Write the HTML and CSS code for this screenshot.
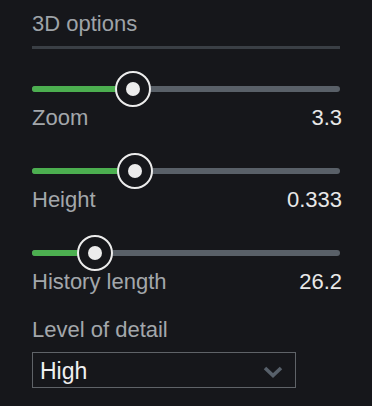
FILE: index.html
```html
<!DOCTYPE html>
<html>
<head>
<meta charset="utf-8">
<link rel="stylesheet" href="styles.css">
</head>
<body>
<div class="panel">
  <div class="title">3D options</div>
  <div class="divider"></div>

  <div class="group">
    <div class="slider">
      <div class="track"><div class="fill" style="width:101px"></div></div>
      <div class="thumb" style="left:101px"><div class="dot"></div></div>
    </div>
    <div class="row"><span class="label">Zoom</span><span class="value">3.3</span></div>
  </div>

  <div class="group">
    <div class="slider">
      <div class="track"><div class="fill" style="width:103px"></div></div>
      <div class="thumb" style="left:103px"><div class="dot"></div></div>
    </div>
    <div class="row"><span class="label">Height</span><span class="value">0.333</span></div>
  </div>

  <div class="group">
    <div class="slider">
      <div class="track"><div class="fill" style="width:63px"></div></div>
      <div class="thumb" style="left:63px"><div class="dot"></div></div>
    </div>
    <div class="row"><span class="label">History length</span><span class="value">26.2</span></div>
  </div>

  <div class="lod-label">Level of detail</div>
  <div class="select">
    <span class="select-text">High</span>
    <svg class="chevron" width="20" height="12" viewBox="0 0 20 12">
      <path d="M2 2 L10 9.5 L18 2" fill="none" stroke="#57606a" stroke-width="3.6"/>
    </svg>
  </div>
</div>
</body>
</html>
```

FILE: styles.css
```css
html, body {
  margin: 0;
  padding: 0;
  background: #16171b;
}
body {
  font-family: "Liberation Sans", Arial, sans-serif;
  font-size: 22px;
  line-height: 26px;
}
.panel {
  width: 308px;
  padding: 11px 0 0 32px;
}
.title {
  color: #9ea3a8;
}
.divider {
  margin-top: 9px;
  height: 3px;
  background: #3a3f45;
}
.group {
  margin-top: 24px;
}
.slider {
  position: relative;
  height: 32px;
  display: flex;
  align-items: center;
}
.track {
  width: 100%;
  height: 6px;
  border-radius: 3px;
  background: #596068;
  overflow: hidden;
}
.fill {
  height: 100%;
  background: #4caf50;
}
.thumb {
  position: absolute;
  top: 50%;
  width: 32px;
  height: 32px;
  border: 2px solid #ececec;
  border-radius: 50%;
  background: #16171b;
  transform: translate(-50%, -50%);
  display: flex;
  align-items: center;
  justify-content: center;
}
.dot {
  width: 14px;
  height: 14px;
  border-radius: 50%;
  background: #ececec;
}
.row {
  display: flex;
  justify-content: space-between;
  margin-right: -2px;
}
.label {
  color: #a3a7ab;
}
.value {
  color: #e8e8e8;
}
.lod-label {
  margin-top: 22px;
  color: #a3a7ab;
}
.select {
  box-sizing: border-box;
  margin-top: 9px;
  width: 264px;
  height: 36px;
  border: 1px solid #5f6368;
  display: flex;
  align-items: center;
  justify-content: space-between;
  padding: 0 12px 0 7px;
}
.select-text {
  font-size: 23px;
  color: #f0f0f0;
  padding-top: 2px;
}
.chevron {
  margin-top: 3px;
}
```
